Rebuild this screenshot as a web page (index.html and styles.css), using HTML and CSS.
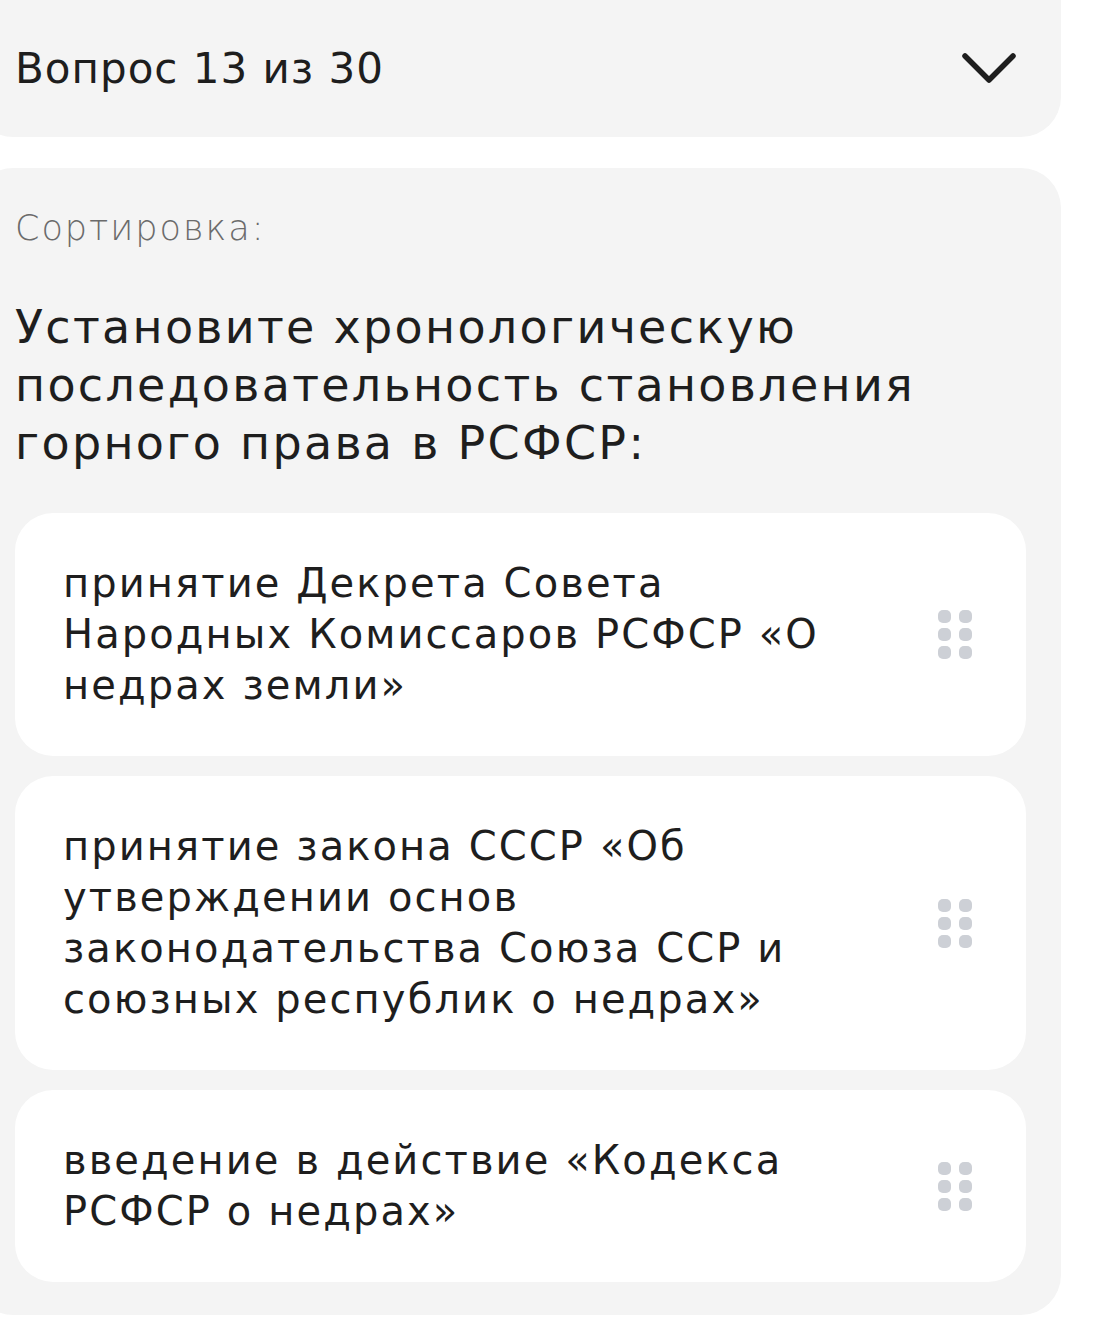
FILE: index.html
```html
<!DOCTYPE html>
<html lang="ru">
<head>
    <meta charset="UTF-8">
    <meta name="viewport" content="width=device-width, initial-scale=1.0">
    <title>Вопрос 13 из 30</title>
    <link rel="stylesheet" href="styles.css">
</head>
<body>
    <div class="page">
        <div class="question-bar">
            <span class="question-count">Вопрос 13 из 30</span>
            <svg class="chevron" width="54" height="34" viewBox="0 0 54 34">
                <path d="M3 4 L27 28 L51 4" fill="none" stroke="#1e1e1e" stroke-width="5.5" stroke-linecap="round" stroke-linejoin="round"/>
            </svg>
        </div>

        <div class="question-card">
            <div class="question-type">Сортировка:</div>
            <h1 class="question-title">Установите хронологическую последовательность становления горного права в РСФСР:</h1>

            <div class="sort-list">
                <div class="sort-item">
                    <div class="sort-text">принятие Декрета Совета Народных Комиссаров РСФСР «О недрах земли»</div>
                    <div class="handle"><i></i><i></i><i></i><i></i><i></i><i></i></div>
                </div>
                <div class="sort-item">
                    <div class="sort-text">принятие закона СССР «Об утверждении основ законодательства Союза ССР и союзных республик о недрах»</div>
                    <div class="handle"><i></i><i></i><i></i><i></i><i></i><i></i></div>
                </div>
                <div class="sort-item">
                    <div class="sort-text">введение в действие «Кодекса РСФСР о недрах»</div>
                    <div class="handle"><i></i><i></i><i></i><i></i><i></i><i></i></div>
                </div>
            </div>
        </div>
    </div>
</body>
</html>
```

FILE: styles.css
```css
body {
    margin: 0;
    background: #ffffff;
    font-family: "DejaVu Sans", "Open Sans", sans-serif;
    color: #1e1e1e;
}
.page {
    width: 1088px;
    margin-left: -27px;
}
.question-bar {
    display: flex;
    align-items: center;
    justify-content: space-between;
    background: #f4f4f4;
    border-radius: 0 0 40px 40px;
    height: 137px;
    padding: 0 45px 0 42px;
    box-sizing: border-box;
}
.question-count {
    font-size: 42px;
    letter-spacing: 1px;
}
.chevron {
    display: block;
    margin-top: 1px;
}
.question-card {
    margin-top: 31px;
    background: #f4f4f4;
    border-radius: 40px;
    padding: 36px 35px 33px 42px;
}
.question-type {
    font-size: 35px;
    font-weight: 300;
    letter-spacing: 2px;
    color: #6b6b6b;
    line-height: 48px;
}
.question-title {
    margin: 46px 0 41px;
    font-size: 46px;
    font-weight: 400;
    letter-spacing: 2.3px;
    line-height: 58px;
    color: #1e1e1e;
}
.sort-list {
    display: flex;
    flex-direction: column;
    gap: 20px;
}
.sort-item {
    display: flex;
    align-items: center;
    justify-content: space-between;
    background: #ffffff;
    border-radius: 38px;
    padding: 45px 54px 45px 48px;
}
.sort-text {
    font-size: 40px;
    letter-spacing: 2.1px;
    line-height: 51px;
    max-width: 800px;
}
.handle {
    display: grid;
    grid-template-columns: 13px 13px;
    gap: 5px 8px;
    flex-shrink: 0;
}
.handle i {
    display: block;
    width: 13px;
    height: 13px;
    border-radius: 5px;
    background: #cdd0d6;
}
```
